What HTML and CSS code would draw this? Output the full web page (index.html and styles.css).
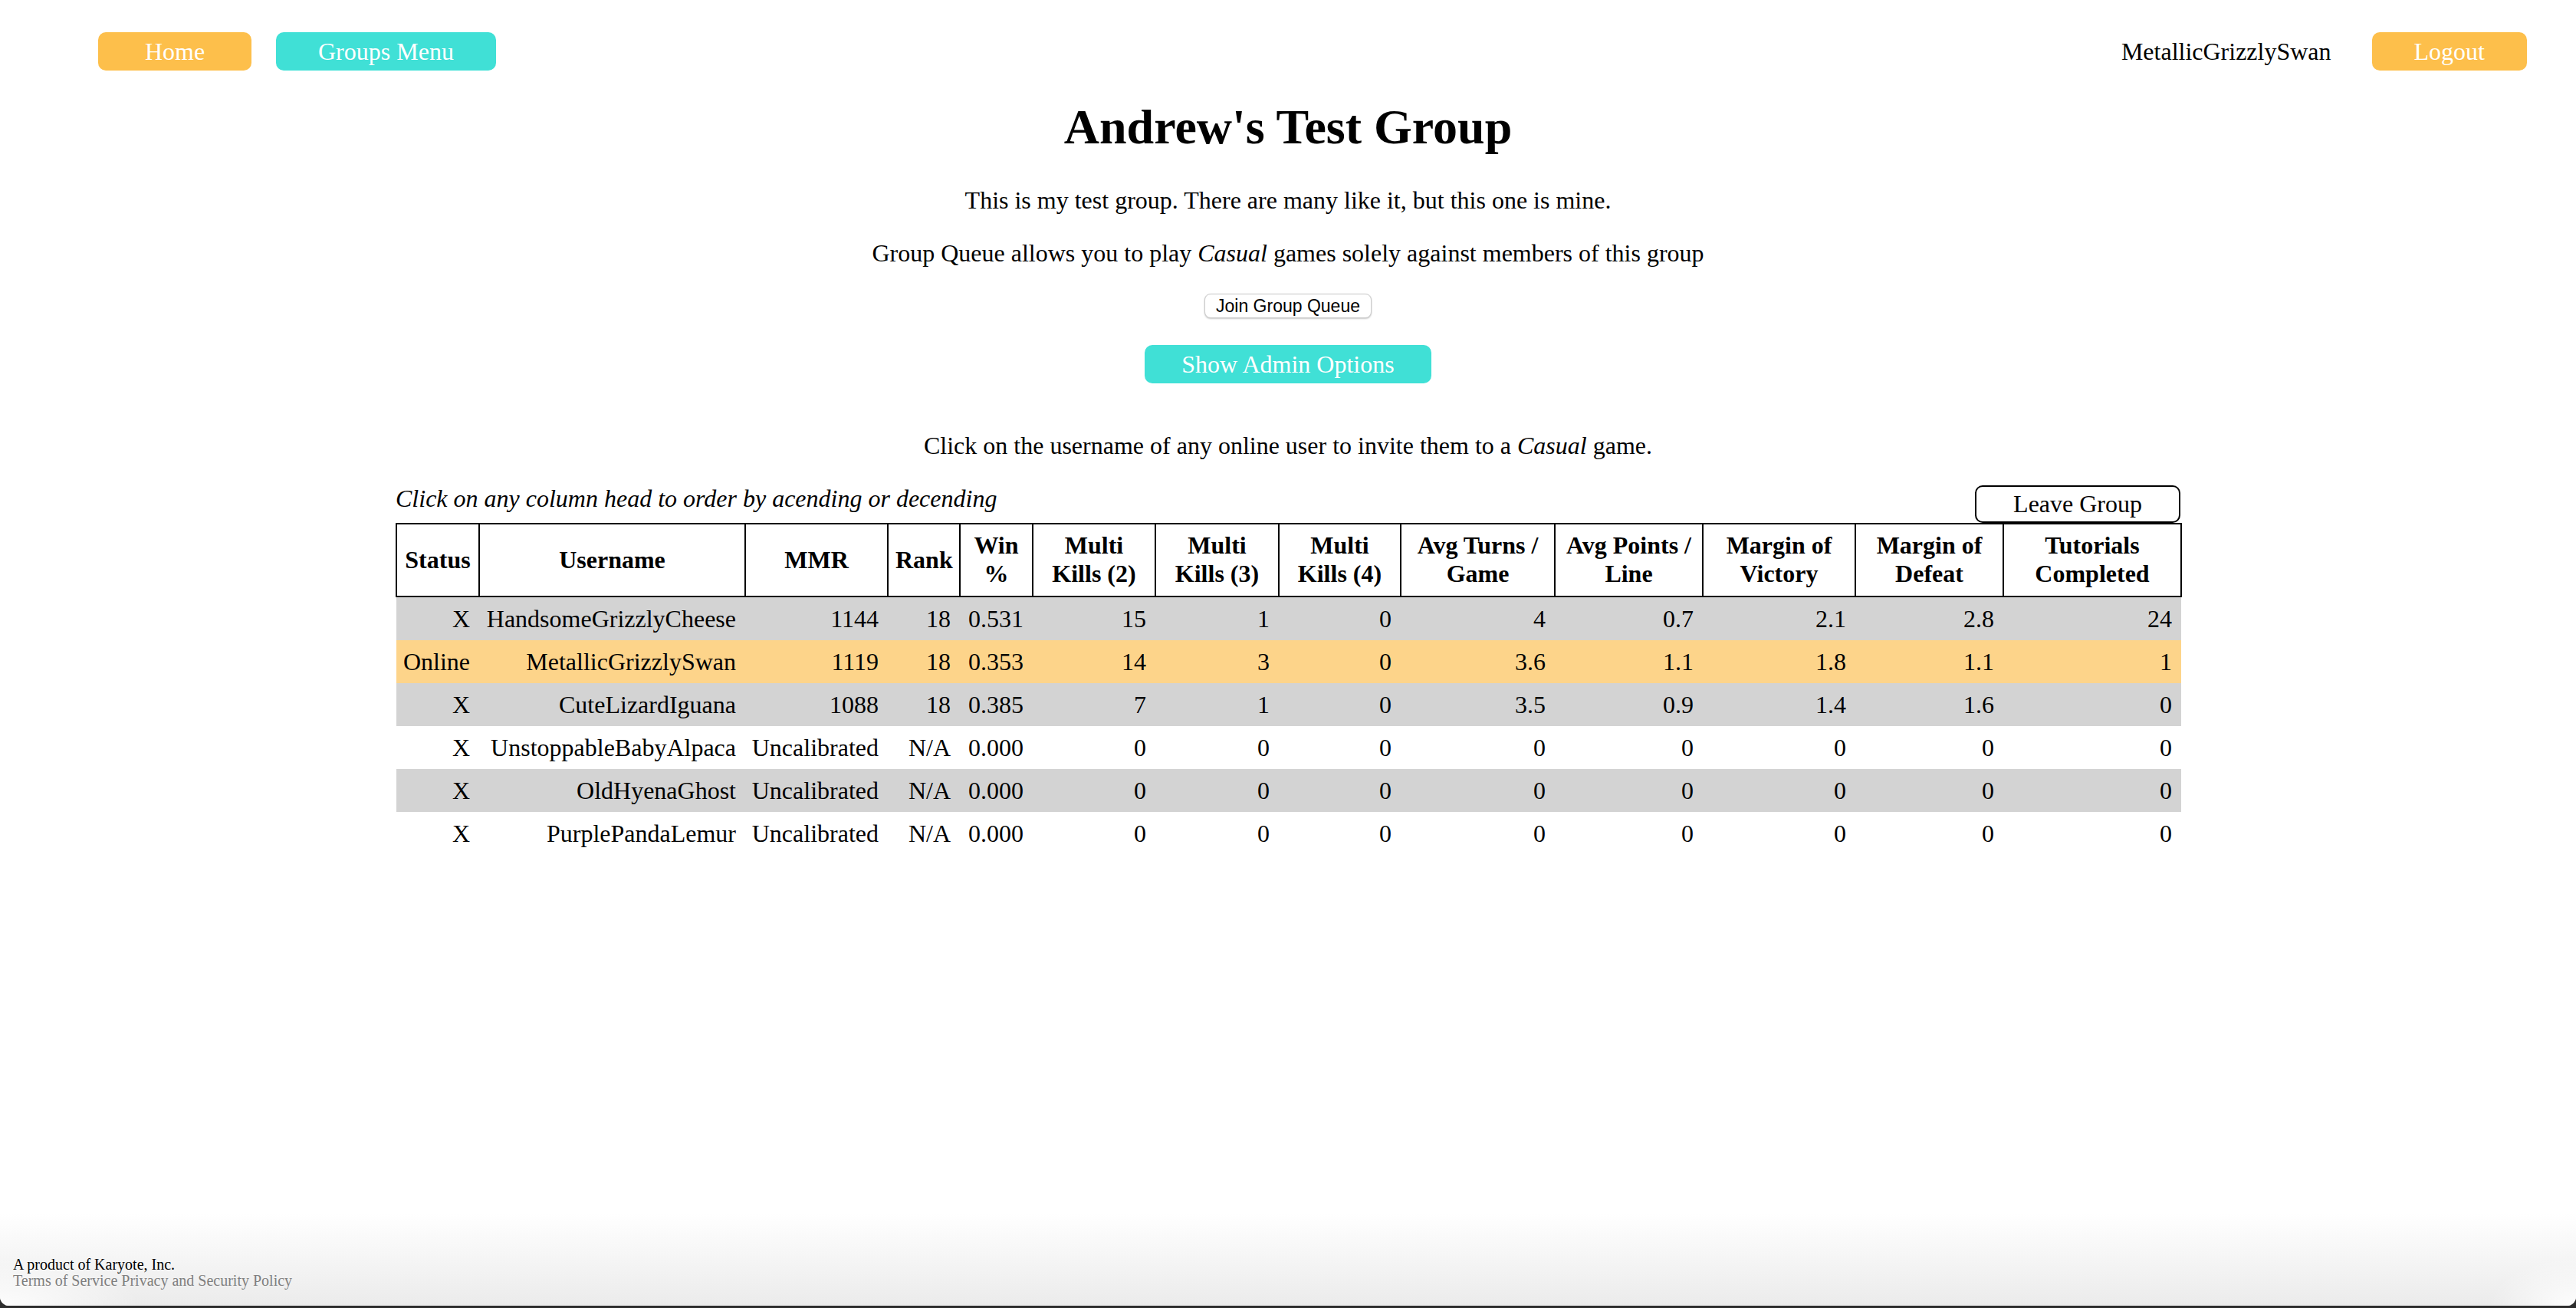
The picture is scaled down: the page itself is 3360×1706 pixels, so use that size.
FILE: index.html
```html
<!DOCTYPE html>
<html lang="en">
<head>
<meta charset="utf-8">
<title>Andrew's Test Group</title>
<link rel="stylesheet" href="styles.css">
</head>
<body>
<div class="page">
  <header class="topbar">
    <div class="nav-left">
      <button class="btn btn-orange">Home</button>
      <button class="btn btn-teal">Groups Menu</button>
    </div>
    <div class="nav-right">
      <span class="user">MetallicGrizzlySwan</span>
      <button class="btn btn-orange">Logout</button>
    </div>
  </header>

  <main class="content">
    <h1 class="title">Andrew's Test Group</h1>
    <p class="desc">This is my test group. There are many like it, but this one is mine.</p>
    <p class="desc desc-2">Group Queue allows you to play <em>Casual</em> games solely against members of this group</p>
    <button class="join">Join Group Queue</button>
    <button class="btn btn-teal admin">Show Admin Options</button>
    <p class="invite">Click on the username of any online user to invite them to a <em>Casual</em> game.</p>

    <div class="table-wrap">
      <div class="table-top">
        <em class="hint">Click on any column head to order by acending or decending</em>
        <button class="leave">Leave Group</button>
      </div>
      <table class="stats">
        <colgroup>
          <col class="c-status"><col class="c-user"><col class="c-mmr"><col class="c-rank"><col class="c-win">
          <col class="c-mk"><col class="c-mk3"><col class="c-mk4"><col class="c-turns"><col class="c-points">
          <col class="c-victory"><col class="c-defeat"><col class="c-tut">
        </colgroup>
        <thead>
          <tr>
            <th>Status</th><th>Username</th><th>MMR</th><th>Rank</th><th>Win %</th>
            <th>Multi Kills (2)</th><th>Multi Kills (3)</th><th>Multi Kills (4)</th>
            <th>Avg Turns / Game</th><th>Avg Points / Line</th><th>Margin of Victory</th>
            <th>Margin of Defeat</th><th>Tutorials Completed</th>
          </tr>
        </thead>
        <tbody>
          <tr class="shaded">
            <td>X</td><td>HandsomeGrizzlyCheese</td><td>1144</td><td>18</td><td>0.531</td>
            <td>15</td><td>1</td><td>0</td><td>4</td><td>0.7</td><td>2.1</td><td>2.8</td><td>24</td>
          </tr>
          <tr class="me">
            <td>Online</td><td>MetallicGrizzlySwan</td><td>1119</td><td>18</td><td>0.353</td>
            <td>14</td><td>3</td><td>0</td><td>3.6</td><td>1.1</td><td>1.8</td><td>1.1</td><td>1</td>
          </tr>
          <tr class="shaded">
            <td>X</td><td>CuteLizardIguana</td><td>1088</td><td>18</td><td>0.385</td>
            <td>7</td><td>1</td><td>0</td><td>3.5</td><td>0.9</td><td>1.4</td><td>1.6</td><td>0</td>
          </tr>
          <tr>
            <td>X</td><td>UnstoppableBabyAlpaca</td><td>Uncalibrated</td><td>N/A</td><td>0.000</td>
            <td>0</td><td>0</td><td>0</td><td>0</td><td>0</td><td>0</td><td>0</td><td>0</td>
          </tr>
          <tr class="shaded">
            <td>X</td><td>OldHyenaGhost</td><td>Uncalibrated</td><td>N/A</td><td>0.000</td>
            <td>0</td><td>0</td><td>0</td><td>0</td><td>0</td><td>0</td><td>0</td><td>0</td>
          </tr>
          <tr>
            <td>X</td><td>PurplePandaLemur</td><td>Uncalibrated</td><td>N/A</td><td>0.000</td>
            <td>0</td><td>0</td><td>0</td><td>0</td><td>0</td><td>0</td><td>0</td><td>0</td>
          </tr>
        </tbody>
      </table>
    </div>
  </main>

  <footer class="footer">
    <div class="footer-line">A product of Karyote, Inc.</div>
    <div class="footer-links"><a href="#">Terms of Service</a> <a href="#">Privacy and Security Policy</a></div>
  </footer>
</div>
</body>
</html>
```

FILE: styles.css
```css
html {
  background: #2e2e2e;
}

body {
  margin: 0;
  font-family: "Liberation Serif", "Times New Roman", serif;
  font-size: 32px;
  color: #000;
}

.page {
  min-height: calc(100vh - 3px);
  background: #fff;
  border-radius: 0 0 12px 12px;
  overflow: hidden;
  display: flex;
  flex-direction: column;
}

/* ---------- top bar ---------- */
.topbar {
  display: flex;
  justify-content: space-between;
  align-items: center;
  padding: 42px 64px 0 128px;
}

.nav-left {
  display: flex;
  gap: 32px;
}

.nav-right {
  display: flex;
  align-items: center;
  gap: 53px;
}

.user {
  font-size: 32px;
  line-height: 37px;
}

.btn {
  height: 50px;
  min-width: 200px;
  padding: 0 55px;
  box-sizing: border-box;
  border: none;
  border-radius: 10px;
  color: #fff;
  font-family: "Liberation Serif", "Times New Roman", serif;
  font-size: 32px;
  line-height: 50px;
  cursor: pointer;
}

.btn-orange {
  background: #fdbf4b;
}

.btn-teal {
  background: #40e0d6;
}

/* ---------- main content ---------- */
.content {
  display: flex;
  flex-direction: column;
  align-items: center;
}

.title {
  margin: 37px 0 0;
  font-size: 64px;
  line-height: 74px;
  font-weight: bold;
}

.desc {
  margin: 40px 0 0;
  line-height: 37px;
}

.desc-2 {
  margin-top: 32px;
}

.join {
  margin-top: 34px;
  height: 32px;
  padding: 0 14px;
  background: #fff;
  border: 1px solid #c9c9c9;
  border-radius: 8px;
  box-shadow: 0 1px 2px rgba(0, 0, 0, 0.22);
  font-family: "Liberation Sans", Arial, sans-serif;
  font-size: 23px;
  line-height: 30px;
  color: #000;
}

.admin {
  margin-top: 35px;
  min-width: 0;
  padding: 0 48px;
}

.invite {
  margin: 63px 0 0;
  line-height: 37px;
}

/* ---------- table ---------- */
.table-wrap {
  margin-top: 32px;
  width: 2328px;
}

.table-top {
  display: flex;
  justify-content: space-between;
  align-items: flex-end;
}

.hint {
  line-height: 37px;
  margin-bottom: 13px;
}

.leave {
  height: 49px;
  padding: 0 48px;
  background: #fff;
  border: 2px solid #000;
  border-radius: 10px;
  font-family: "Liberation Serif", "Times New Roman", serif;
  font-size: 32px;
  line-height: 45px;
  color: #000;
}

.stats {
  width: 2328px;
  table-layout: fixed;
  border-collapse: collapse;
}

.c-status { width: 108px; }
.c-user { width: 347px; }
.c-mmr { width: 186px; }
.c-rank { width: 94px; }
.c-win { width: 95px; }
.c-mk { width: 160px; }
.c-mk3 { width: 161px; }
.c-mk4 { width: 159px; }
.c-turns { width: 201px; }
.c-points { width: 193px; }
.c-victory { width: 199px; }
.c-defeat { width: 193px; }
.c-tut { width: 232px; }

.stats th {
  border: 2px solid #000;
  padding: 9px 9px 10px;
  font-weight: bold;
  line-height: 37px;
  text-align: center;
  vertical-align: middle;
}

.stats td {
  padding: 0 12px 0 4px;
  line-height: 56px;
  text-align: right;
  white-space: nowrap;
}

.stats tr.shaded {
  background: #d3d3d3;
}

.stats tr.me {
  background: #fdd48a;
}

/* ---------- footer ---------- */
.footer {
  margin-top: auto;
  padding: 56px 17px 22px;
  background:
    radial-gradient(ellipse 260px 90px at 0 100%, rgba(255, 255, 255, 0.9), rgba(255, 255, 255, 0) 70%),
    radial-gradient(ellipse 160px 90px at 100% 100%, rgba(255, 255, 255, 0.9), rgba(255, 255, 255, 0) 70%),
    linear-gradient(#ffffff, #ebebeb);
  font-size: 20px;
  line-height: 21px;
}

.footer-line {
  color: #000;
}

.footer-links a {
  color: #7f7f7f;
  text-decoration: none;
}
```
